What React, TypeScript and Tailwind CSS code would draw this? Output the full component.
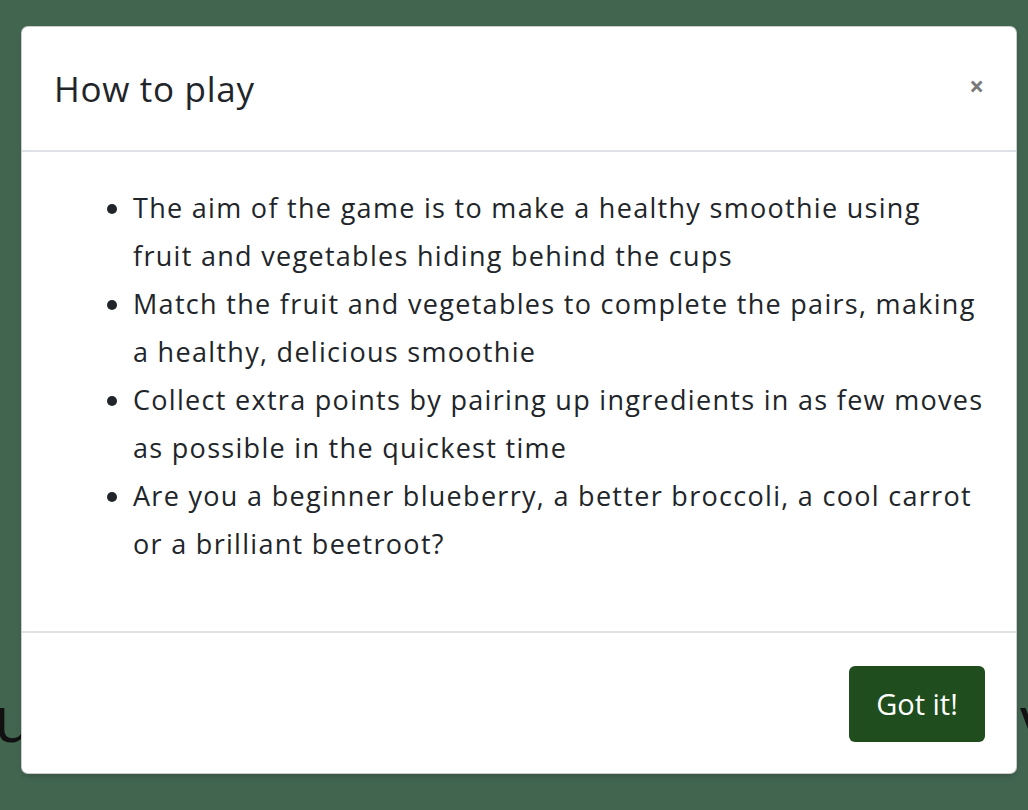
export default function App() {
  const items = [
    ["The aim of the game is to make a healthy smoothie using", "fruit and vegetables hiding behind the cups"],
    ["Match the fruit and vegetables to complete the pairs, making", "a healthy, delicious smoothie"],
    ["Collect extra points by pairing up ingredients in as few moves", "as possible in the quickest time"],
    ["Are you a beginner blueberry, a better broccoli, a cool carrot", "or a brilliant beetroot?"],
  ];

  return (
    <div
      className="relative w-[1028px] h-[810px] overflow-hidden bg-[#426550]"
      style={{ fontFamily: "'Open Sans', Lato, sans-serif" }}
    >
      {/* page behind the backdrop */}
      <div className="pt-[686px] flex justify-between text-[64px] leading-none text-[#111]">
        <span className="-ml-[6px]">u</span>
        <span className="-mr-[24px]">v</span>
      </div>

      {/* Modal */}
      <div className="absolute left-[21px] top-[26px] w-[996px] bg-white rounded-[7px] border border-black/20 shadow-md text-[#212529]">
        {/* Header */}
        <div className="h-[125px] flex items-center justify-between pl-[32px] pr-[32px] border-b-2 border-[#dee2e6]">
          <h5 className="text-[35px] font-normal pt-[1px] tracking-[0.7px]">How to play</h5>
          <button className="text-[26px] font-bold text-[#7a7a7a] leading-none -mt-[6px]">×</button>
        </div>

        {/* Body */}
        <div className="pt-[32px] pb-[63px] px-[32px]">
          <ul className="list-disc pl-[79px] text-[27px] leading-[48px] tracking-[1.3px]">
            {items.map((lines, i) => (
              <li key={i}>
                {lines[0]}
                <br />
                {lines[1]}
              </li>
            ))}
          </ul>
        </div>

        {/* Footer */}
        <div className="border-t-2 border-[#dee2e6] flex justify-end pt-[33px] pb-[31px] pr-[31px]">
          <button className="w-[136px] h-[76px] rounded-[6px] bg-[#1f4d1e] text-white text-[29px]">
            Got it!
          </button>
        </div>
      </div>
    </div>
  );
}
